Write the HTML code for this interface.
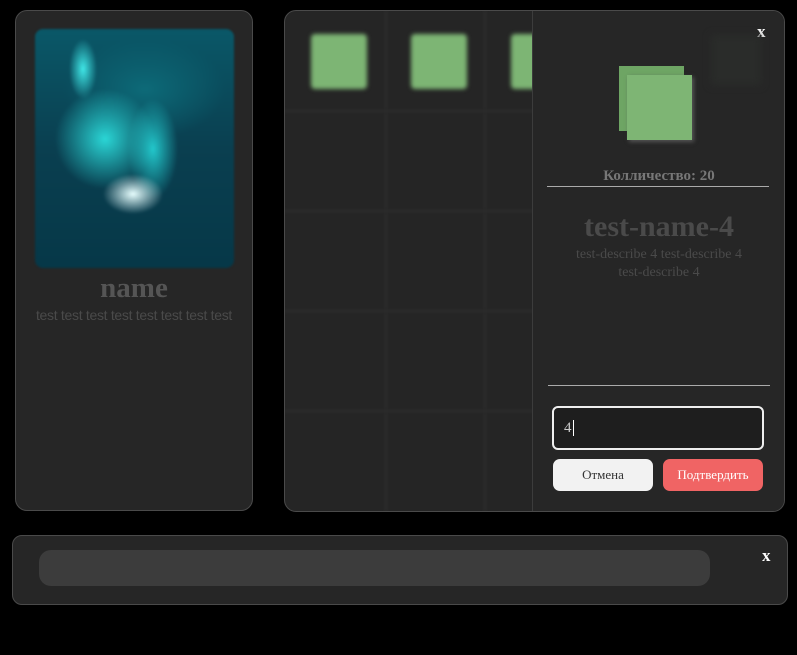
<!DOCTYPE html>
<html><head><style>
body{margin:0;width:797px;height:655px;background:#000;position:relative;overflow:hidden;font-family:"Liberation Serif",serif}
.abs{position:absolute}
.card{left:15px;top:10px;width:236px;height:499px;background:#262626;border:1px solid #4a4a4a;border-radius:12px}
.img{left:19px;top:18px;width:199px;height:239px;border-radius:8px;background:
radial-gradient(ellipse 30px 20px at 98px 165px,#e8ffff,transparent),
radial-gradient(ellipse 14px 30px at 48px 40px,#40e8e8,transparent),
radial-gradient(ellipse 50px 50px at 70px 110px,#2ad6d6,transparent),
radial-gradient(ellipse 25px 50px at 118px 120px,#22c8cc,transparent),
radial-gradient(ellipse 80px 50px at 110px 60px,#0d6a78,transparent),
linear-gradient(#0a5868,#0a3f50 50%,#063848);filter:blur(1px)}
.main{left:284px;top:10px;width:499px;height:500px;background:#252525;border:1px solid #4a4a4a;border-radius:12px;overflow:hidden}
.vl{width:4px;top:0;bottom:0;background:#2a2a2a;filter:blur(1px)}
.hl{height:4px;left:0;width:250px;background:#2a2a2a;filter:blur(1px)}
.gs{width:56px;height:55px;background:#7db574;filter:blur(2px);border-radius:4px}
.side{left:247px;top:-1px;width:252px;height:502px;background:#262626;border-left:1px solid #3c3c3c}
.bot{left:12px;top:535px;width:774px;height:68px;background:#262626;border:1px solid #4a4a4a;border-radius:10px}
.c{text-align:center}
</style></head><body>
<div class="abs card">
 <div class="abs img"></div>
 <div class="abs c" style="left:0;width:236px;top:261px;font-size:29px;font-weight:bold;color:#555">name</div>
 <div class="abs c" style="left:0;width:236px;top:296px;font-size:14px;color:#4a4a4a;font-family:'Liberation Sans',sans-serif;letter-spacing:-0.3px">test test test test test test test test</div>
</div>
<div class="abs main">
 <div class="abs vl" style="left:99px"></div>
 <div class="abs vl" style="left:198px"></div>
 <div class="abs hl" style="top:98px"></div>
 <div class="abs hl" style="top:198px"></div>
 <div class="abs hl" style="top:298px"></div>
 <div class="abs hl" style="top:398px"></div>
 <div class="abs gs" style="left:26px;top:23px"></div>
 <div class="abs gs" style="left:126px;top:23px"></div>
 <div class="abs gs" style="left:226px;top:23px"></div>
 <div class="abs side">
  <div class="abs" style="left:224px;top:12px;color:#fff;font-weight:bold;font-size:17px">x</div>
  <div class="abs" style="left:178px;top:25px;width:50px;height:50px;background:#2a2c2a;filter:blur(4px)"></div>
  <div class="abs" style="left:86px;top:56px;width:65px;height:65px;background:#6ea564"></div>
  <div class="abs" style="left:94px;top:65px;width:65px;height:65px;background:#7eb574;box-shadow:2px 2px 4px #555"></div>
  <div class="abs c" style="left:0;width:252px;top:158px;font-size:15px;font-weight:bold;color:#777">Колличество: 20</div>
  <div class="abs" style="left:14px;top:176px;width:222px;height:1px;background:#aaa"></div>
  <div class="abs c" style="left:0;width:252px;top:200px;font-size:30px;font-weight:bold;color:#4a4a4a">test-name-4</div>
  <div class="abs c" style="left:30px;width:192px;top:236px;font-size:14px;line-height:18px;color:#4a4a4a">test-describe 4 test-describe 4 test-describe 4</div>
  <div class="abs" style="left:15px;top:375px;width:222px;height:1px;background:#aaa"></div>
  <div class="abs" style="left:19px;top:396px;height:40px;border:2px solid #eee;border-radius:6px;background:#1e1e1e;color:#ccc;font-size:15px;line-height:40px;padding-left:10px;width:198px">4<span style="border-left:1px solid #fff;margin-left:1px"></span></div>
  <div class="abs c" style="left:20px;top:449px;width:100px;height:32px;line-height:32px;background:#f2f2f2;border-radius:7px;color:#333;font-size:13px">Отмена</div>
  <div class="abs c" style="left:130px;top:449px;width:100px;height:32px;line-height:32px;background:#f06464;border-radius:7px;color:#fff;font-size:13px">Подтвердить</div>
 </div>
</div>
<div class="abs bot">
 <div class="abs" style="left:26px;top:14px;width:671px;height:36px;background:#3c3c3c;border-radius:12px"></div>
 <div class="abs" style="left:749px;top:10px;color:#fff;font-weight:bold;font-size:17px">x</div>
</div>
</body></html>
